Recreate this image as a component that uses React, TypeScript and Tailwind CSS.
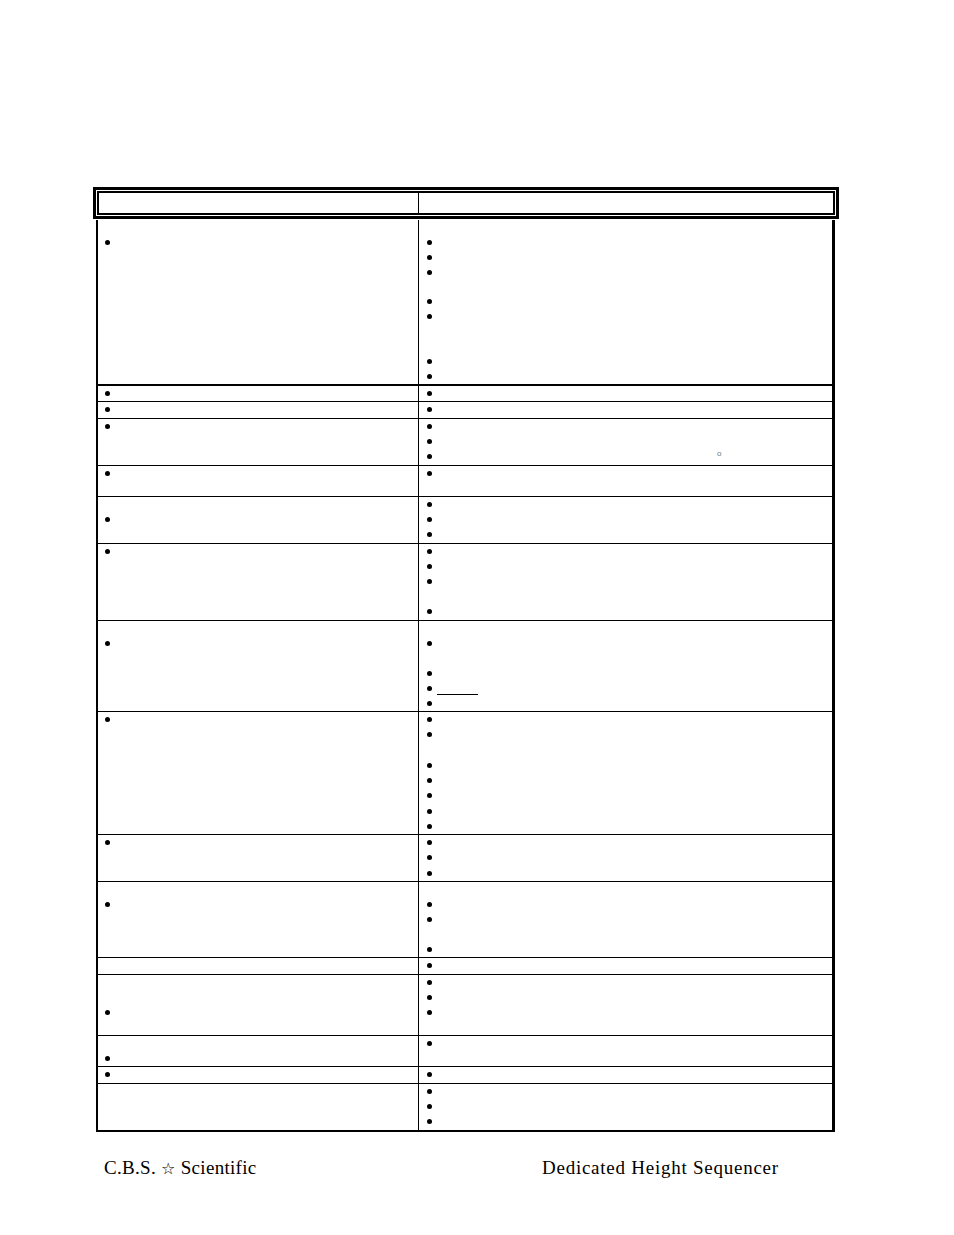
import React from "react";

type L = "e" | "b" | "deg" | "ul";

interface Row {
  h: string;
  border: string;
  lh: string;
  left: L[];
  right: L[];
}

const rows: Row[] = [
  { h: "h-[166px]", border: "border-b-2", lh: "h-[15px]", left: ["e", "b"], right: ["e", "b", "b", "b", "e", "b", "b", "e", "e", "b", "b"] },
  { h: "h-[16px]", border: "border-b", lh: "h-[15px]", left: ["b"], right: ["b"] },
  { h: "h-[17px]", border: "border-b", lh: "h-[15px]", left: ["b"], right: ["b"] },
  { h: "h-[47px]", border: "border-b", lh: "h-[15px]", left: ["b"], right: ["b", "b", "deg"] },
  { h: "h-[31px]", border: "border-b", lh: "h-[15px]", left: ["b"], right: ["b", "e"] },
  { h: "h-[47px]", border: "border-b", lh: "h-[15px]", left: ["e", "b"], right: ["b", "b", "b"] },
  { h: "h-[77px]", border: "border-b", lh: "h-[15px]", left: ["b"], right: ["b", "b", "b", "e", "b"] },
  { h: "h-[91px]", border: "border-b", lh: "h-[15px]", left: ["e", "b"], right: ["e", "b", "e", "b", "ul", "b"] },
  { h: "h-[123px]", border: "border-b", lh: "h-[15.25px]", left: ["b"], right: ["b", "b", "e", "b", "b", "b", "b", "b"] },
  { h: "h-[47px]", border: "border-b", lh: "h-[15.5px]", left: ["b"], right: ["b", "b", "b"] },
  { h: "h-[76px]", border: "border-b", lh: "h-[15px]", left: ["e", "b"], right: ["e", "b", "b", "e", "b"] },
  { h: "h-[17px]", border: "border-b", lh: "h-[15px]", left: [], right: ["b"] },
  { h: "h-[61px]", border: "border-b", lh: "h-[15px]", left: ["e", "e", "b"], right: ["b", "b", "b", "e"] },
  { h: "h-[31px]", border: "border-b", lh: "h-[15px]", left: ["e", "b"], right: ["b", "e"] },
  { h: "h-[17px]", border: "border-b", lh: "h-[15px]", left: ["b"], right: ["b"] },
  { h: "h-[46px]", border: "", lh: "h-[15px]", left: [], right: ["b", "b", "b"] },
];

function Dot() {
  return <span className="block w-[5px] h-[5px] rounded-full bg-black shrink-0" />;
}

function Line({ kind, lh }: { kind: L; lh: string }) {
  if (kind === "e") return <div className={lh} />;
  return (
    <div className={`${lh} flex items-center`}>
      <Dot />
      {kind === "deg" && (
        <span
          className="ml-[285px] self-start mt-[1px] text-[8px] leading-[8px] text-[#777777]"
          style={{ fontFamily: '"Liberation Sans", Arial, sans-serif' }}
        >
          o
        </span>
      )}
      {kind === "ul" && <span className="ml-[5px] w-[41px] h-[1px] bg-black self-end mb-[1px]" />}
    </div>
  );
}

export default function App() {
  return (
    <div
      className="w-[954px] h-[1235px] bg-white pt-[187px] overflow-hidden"
      style={{ fontFamily: '"Liberation Serif", "Times New Roman", serif' }}
    >
      {/* header double box */}
      <div className="ml-[93px] w-[746px] h-[32px] border-[3px] border-black p-[1px]">
        <div className="h-[24px] border-2 border-black flex">
          <div className="w-[320px] border-r border-black" />
          <div className="flex-1" />
        </div>
      </div>
      {/* body table */}
      <div className="ml-[96px] mt-[1px] w-[739px] border-l-2 border-r-[3px] border-b-2 border-black">
        {rows.map((r, i) => (
          <div key={i} className={`${r.h} ${r.border} border-black flex overflow-hidden`}>
            <div className="w-[321px] border-r border-black pl-[7px] flex flex-col">
              {r.left.map((k, j) => (
                <Line key={j} kind={k} lh={r.lh} />
              ))}
            </div>
            <div className="flex-1 pl-[8px] flex flex-col">
              {r.right.map((k, j) => (
                <Line key={j} kind={k} lh={r.lh} />
              ))}
            </div>
          </div>
        ))}
      </div>
      {/* footer */}
      <div className="ml-[104px] mt-[25px] flex text-[19px] leading-[22px] text-black">
        <span className="w-[438px] tracking-[0.3px]">
          C.B.S.{" "}
          <span className="text-[16px] text-black" style={{ fontFamily: '"DejaVu Sans", sans-serif' }}>
            ☆
          </span>{" "}
          Scientific
        </span>
        <span className="tracking-[0.75px]">Dedicated Height Sequencer</span>
      </div>
    </div>
  );
}
